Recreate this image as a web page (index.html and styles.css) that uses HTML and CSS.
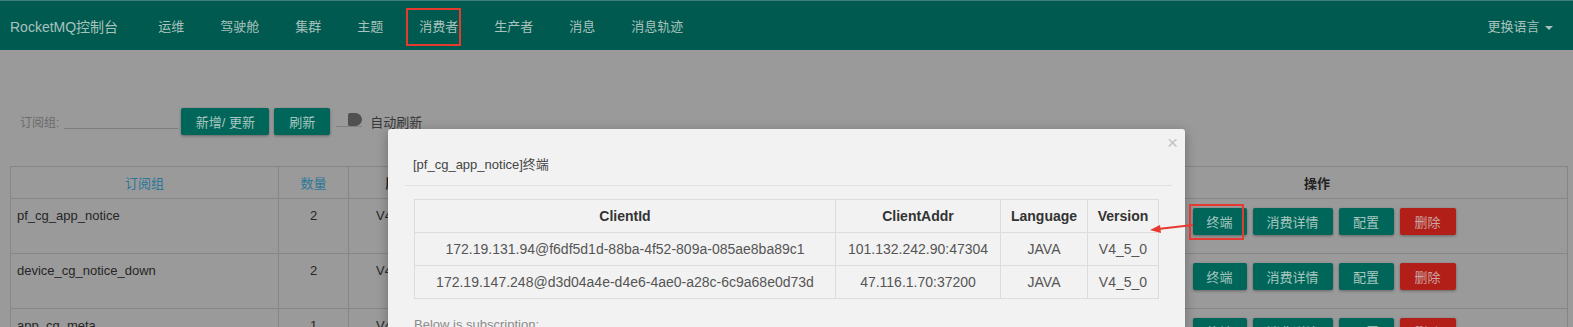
FILE: index.html
```html
<!DOCTYPE html>
<html lang="zh-CN">
<head>
<meta charset="UTF-8" />
<title>RocketMQ控制台 - 消费者</title>
<link rel="stylesheet" href="styles.css">
</head>
<body>
<nav class="navbar">
  <a class="brand">RocketMQ控制台</a>
  <ul class="nav">
    <li>运维</li>
    <li>驾驶舱</li>
    <li>集群</li>
    <li>主题</li>
    <li class="active">消费者</li>
    <li>生产者</li>
    <li>消息</li>
    <li>消息轨迹</li>
  </ul>
  <div class="lang">更换语言 <span class="caret"></span></div>
</nav>

<div class="content">
  <div class="toolbar">
    <label class="field-label">订阅组:</label>
    <span class="field-input"></span>
    <button class="btn">新增/ 更新</button>
    <button class="btn">刷新</button>
    <span class="switch"><span class="knob"></span></span>
    <span class="switch-label">自动刷新</span>
  </div>

  <table class="grid">
    <colgroup>
      <col style="width:268px"><col style="width:70px"><col style="width:100px">
      <col style="width:618px"><col>
    </colgroup>
    <thead>
      <tr>
        <th class="sort">订阅组</th>
        <th class="sort">数量</th>
        <th>版本</th>
        <th></th>
        <th>操作</th>
      </tr>
    </thead>
    <tbody>
      <tr>
        <td class="left">pf_cg_app_notice</td><td>2</td><td>V4_5_0</td><td></td>
        <td><div class="ops"><button class="btn">终端</button><button class="btn">消费详情</button><button class="btn">配置</button><button class="btn danger">删除</button></div></td>
      </tr>
      <tr>
        <td class="left">device_cg_notice_down</td><td>2</td><td>V4_5_0</td><td></td>
        <td><div class="ops"><button class="btn">终端</button><button class="btn">消费详情</button><button class="btn">配置</button><button class="btn danger">删除</button></div></td>
      </tr>
      <tr>
        <td class="left">app_cg_meta</td><td>1</td><td>V4_5_0</td><td></td>
        <td><div class="ops"><button class="btn">终端</button><button class="btn">消费详情</button><button class="btn">配置</button><button class="btn danger">删除</button></div></td>
      </tr>
    </tbody>
  </table>
</div>

<!-- client dialog -->
<div class="modal">
  <div class="modal-header">
    <span class="close">&times;</span>
    <div class="modal-title">[pf_cg_app_notice]终端</div>
  </div>
  <div class="modal-body">
    <table class="clients">
      <thead>
        <tr><th class="c-id">ClientId</th><th class="c-addr">ClientAddr</th><th class="c-lang">Language</th><th>Version</th></tr>
      </thead>
      <tbody>
        <tr><td>172.19.131.94@f6df5d1d-88ba-4f52-809a-085ae8ba89c1</td><td>101.132.242.90:47304</td><td>JAVA</td><td>V4_5_0</td></tr>
        <tr><td>172.19.147.248@d3d04a4e-d4e6-4ae0-a28c-6c9a68e0d73d</td><td>47.116.1.70:37200</td><td>JAVA</td><td>V4_5_0</td></tr>
      </tbody>
    </table>
    <p class="sub-title">Below is subscription:</p>
  </div>
</div>

<!-- screenshot annotations -->
<div class="mark mark-nav"></div>
<div class="mark mark-btn"></div>
<svg class="arrow" width="44" height="12" viewBox="0 0 44 12">
  <line x1="43" y1="3" x2="8" y2="7" stroke="#e8392f" stroke-width="2" />
  <polygon points="0,8 10,3 11,11" fill="#e8392f" />
</svg>
</body>
</html>
```

FILE: styles.css
```css
body {
  margin: 0;
  background: #9a9a9a;
  font-family: 'Liberation Sans', 'Noto Sans CJK SC', sans-serif;
  font-size: 13px;
  color: #2a2a2a;
  overflow: hidden;
}
.navbar {
  height: 49px;
  border-top: 1px solid #3f7f78;
  background: #005a50;
  display: flex;
  align-items: center;
  color: #a8c2bd;
}
.brand {
  padding: 0 22px 0 10px;
  font-size: 14px;
}
.nav {
  display: flex;
  list-style: none;
  margin: 0;
  padding: 0;
  flex: 1;
}
.nav li {
  padding: 0 18px;
  font-size: 13px;
}
.lang {
  padding-right: 20px;
  font-size: 13px;
}
.caret {
  display: inline-block;
  width: 0;
  height: 0;
  margin-left: 2px;
  vertical-align: middle;
  border-top: 4px solid #a8c2bd;
  border-left: 4px solid transparent;
  border-right: 4px solid transparent;
}
.content {
  padding: 57px 5px 0 10px;
}
.toolbar {
  display: flex;
  align-items: center;
  height: 28px;
  margin-bottom: 31px;
}
.field-label {
  margin-left: 10px;
  color: #6a6a6a;
  font-size: 12px;
}
.field-input {
  display: inline-block;
  width: 114px;
  height: 14px;
  margin: 0 3px 0 5px;
  border-bottom: 1px solid #7d7d7d;
}
.btn {
  height: 27px;
  padding: 0;
  border: none;
  border-radius: 2px;
  background: #00665a;
  color: #a9c6c0;
  font-family: inherit;
  font-size: 13px;
  box-shadow: 0 1px 3px rgba(0, 0, 0, 0.35);
  margin-right: 5px;
}
.toolbar .btn:first-of-type {
  width: 88px;
}
.toolbar .btn + .btn {
  width: 56px;
}
.switch {
  position: relative;
  display: inline-block;
  width: 26px;
  height: 12px;
  margin: 0 8px 0 1px;
  border-bottom: 1px solid #808080;
  box-sizing: border-box;
}
.knob {
  position: absolute;
  right: 0;
  top: -2px;
  width: 14px;
  height: 13px;
  border-radius: 2px 7px 7px 2px;
  background: #505050;
}
.switch-label {
  font-size: 13px;
  color: #383838;
}
.grid {
  width: 1558px;
  border-collapse: collapse;
  table-layout: fixed;
}
.grid th, .grid td {
  border: 1px solid #868686;
  text-align: center;
  white-space: nowrap;
  overflow: hidden;
}
.grid th {
  height: 29px;
  font-weight: bold;
  color: #222;
}
.grid th.sort {
  color: #2a7799;
  font-weight: normal;
}
.grid td {
  height: 38px;
  padding: 9px 6px 7px;
  vertical-align: top;
  color: #262626;
}
.grid .left {
  text-align: left;
}
.ops {
  display: flex;
  justify-content: center;
  padding-left: 14px;
  gap: 6px;
}
.ops .btn { margin: 0; }
.ops .btn:nth-child(1) { width: 54px; }
.ops .btn:nth-child(2) { width: 80px; }
.ops .btn:nth-child(3) { width: 55px; }
.ops .btn:nth-child(4) { width: 56px; }
.btn.danger {
  background: #b21f18;
  color: #c9a7a4;
}
.modal {
  position: absolute;
  left: 388px;
  top: 129px;
  width: 797px;
  height: 260px;
  background: #f2f2f2;
  border-radius: 3px;
  box-shadow: 0 3px 12px rgba(0, 0, 0, 0.3);
}
.modal-header {
  margin: 0 13px 0 17px;
  padding: 25px 0 12px 8px;
  border-bottom: 1px solid #e1e1e1;
}
.modal-title {
  font-size: 13px;
  color: #444;
}
.close {
  position: absolute;
  right: 7px;
  top: 3px;
  font-size: 19px;
  color: #c2c2c2;
}
.modal-body {
  padding: 13px 0 0 26px;
}
.clients {
  width: 745px;
  border-collapse: collapse;
  font-size: 14px;
}
.clients th, .clients td {
  border: 1px solid #dcdcdc;
  height: 32px;
  padding: 0;
  text-align: center;
  color: #555;
  white-space: nowrap;
}
.clients th {
  color: #333;
  font-weight: bold;
}
.c-id { width: 420px; }
.c-addr { width: 164px; }
.c-lang { width: 86px; }
.sub-title {
  margin: 18px 0 0;
  font-size: 13px;
  color: #8a8a8a;
}
.mark {
  position: absolute;
  border: 2px solid #e53a30;
}
.mark-nav {
  left: 406px;
  top: 8px;
  width: 51px;
  height: 34px;
}
.mark-btn {
  left: 1189px;
  top: 204px;
  width: 51px;
  height: 32px;
}
.arrow {
  position: absolute;
  left: 1150px;
  top: 222px;
}
```
